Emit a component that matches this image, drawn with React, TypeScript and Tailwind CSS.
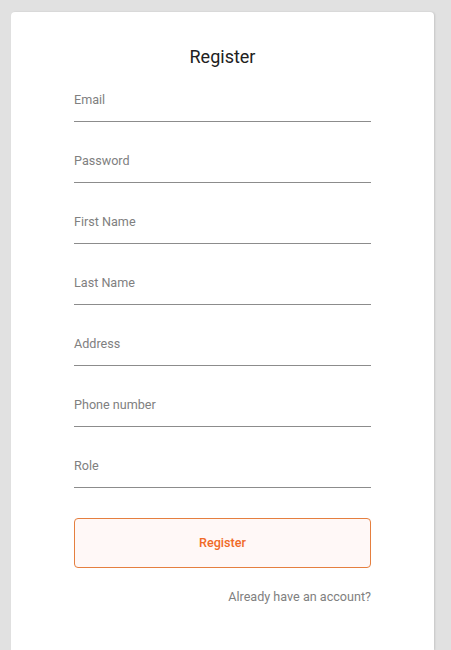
import React from 'react';

const fields = ['Email', 'Password', 'First Name', 'Last Name', 'Address', 'Phone number', 'Role'];

export default function App() {
  return (
    <div className="min-h-[650px] bg-[#e1e1e1] pt-[12px] pl-[11px] font-['Roboto',sans-serif]">
      <div className="w-[423px] min-h-[638px] rounded-t-[4px] bg-white px-[63px] pt-[33px] shadow-[1px_0_2px_rgba(0,0,0,0.12)]">
        <h1 className="text-center text-[18px] leading-[24px] text-[#212121]">Register</h1>

        <form className="mt-[-8px]">
          {fields.map((label) => (
            <div key={label} className="border-b border-[#8c8c8c] pt-[31px] pb-[13px]">
              <label className="block text-[12.6px] leading-[16px] text-[#808080]">{label}</label>
            </div>
          ))}

          <button
            type="button"
            className="mt-[30px] flex h-[50px] w-full items-center justify-center rounded-[4px] border border-[#e57f3f] bg-[#fff8f7] text-[12.6px] font-medium text-[#f06a28]"
          >
            Register
          </button>
        </form>

        <p className="mt-[21px] text-right text-[12.6px] leading-[16px] text-[#808080]">
          Already have an account?
        </p>
      </div>
    </div>
  );
}
